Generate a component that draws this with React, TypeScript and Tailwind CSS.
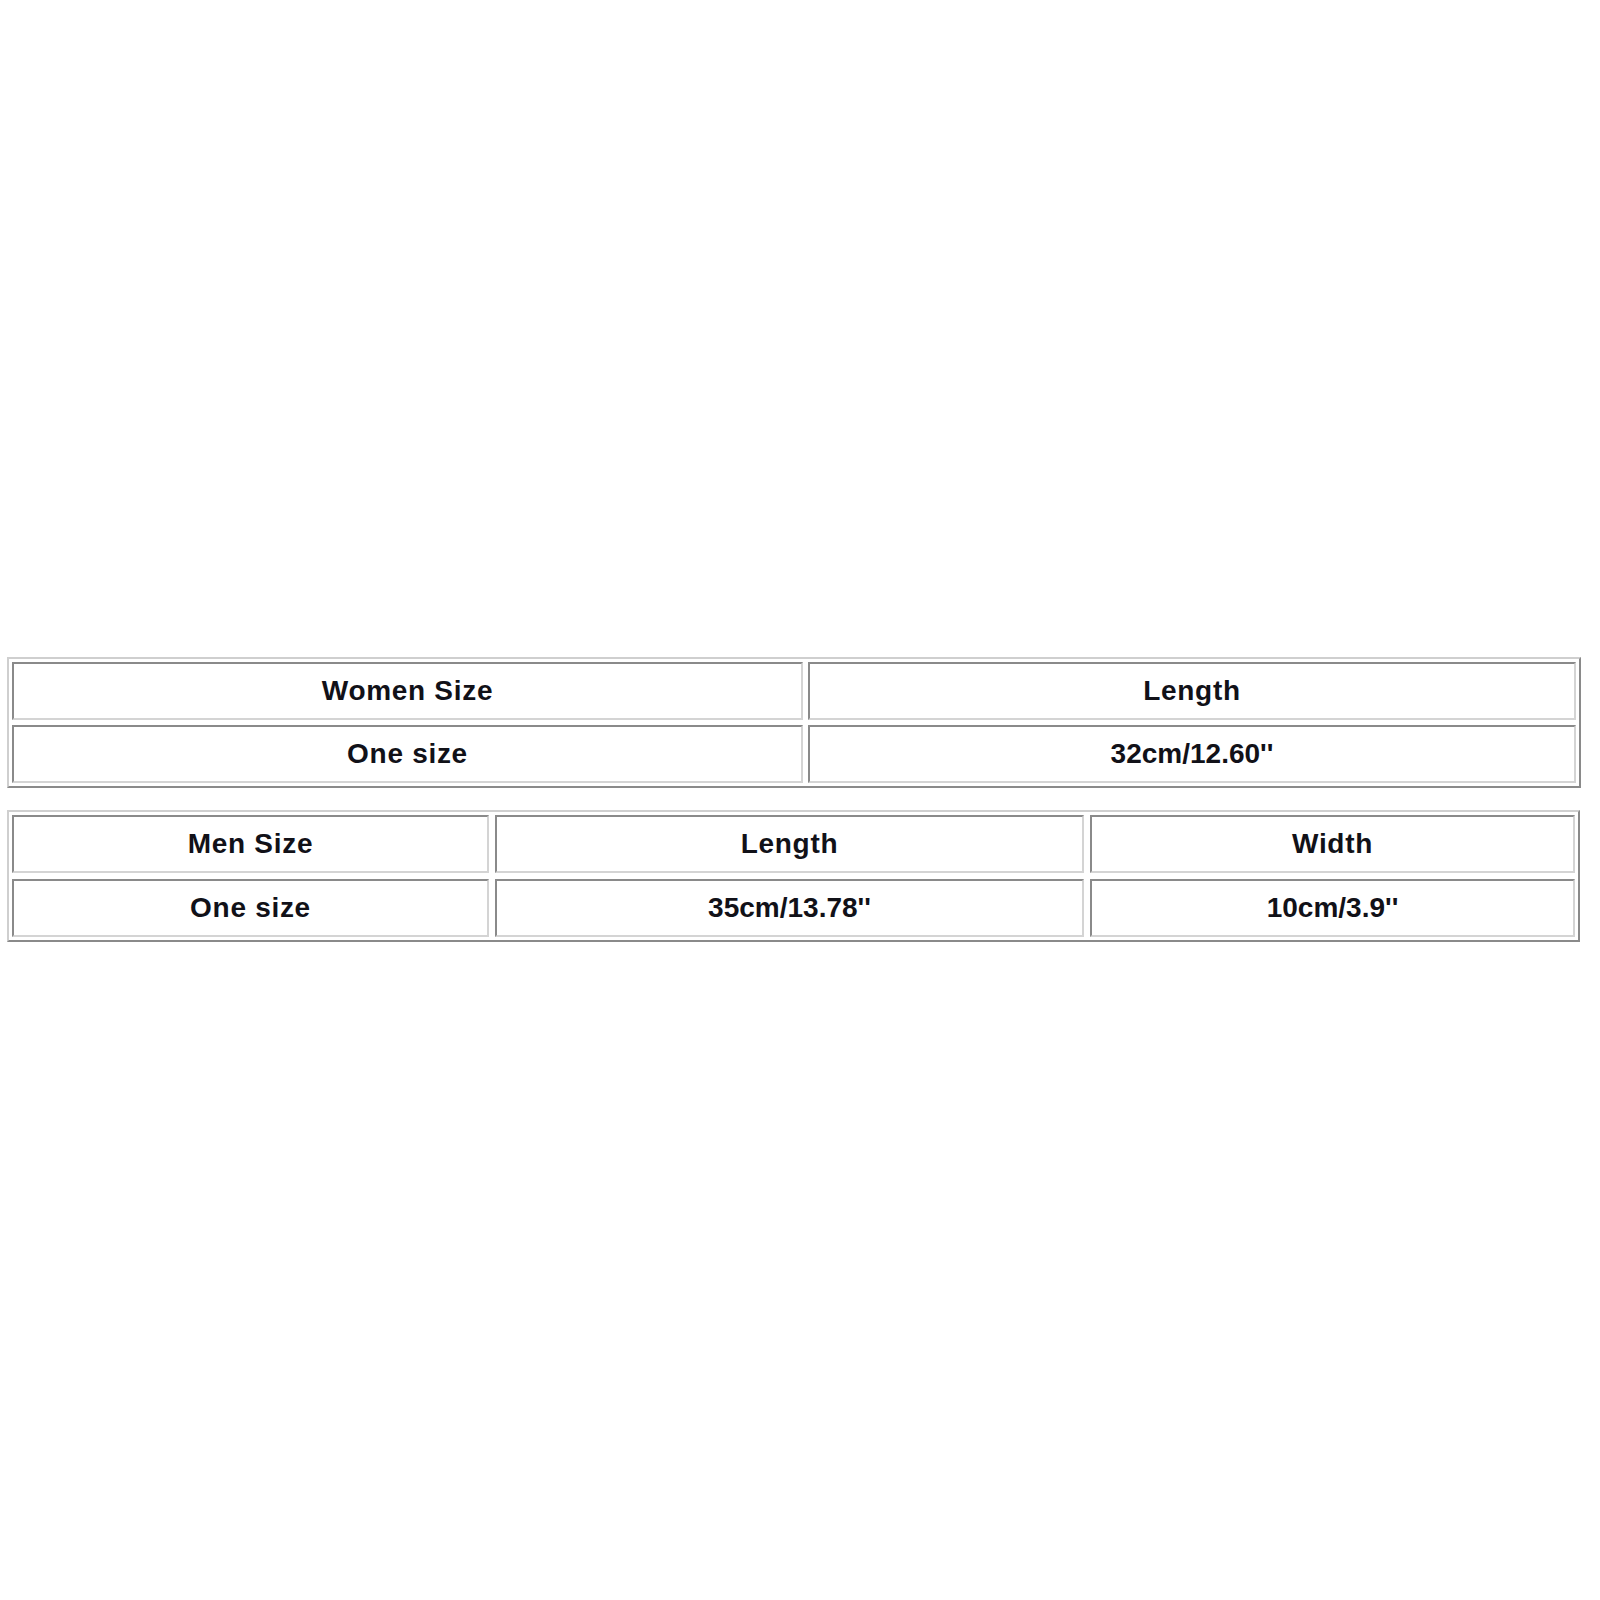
import React from "react";

const cell =
  "flex items-center justify-center border-2 border-t-[#8a8a8a] border-l-[#8a8a8a] border-b-[#d4d4d4] border-r-[#d4d4d4] bg-white text-[28px] font-bold text-[#111118] leading-none";
const word = cell + " tracking-[0.7px]";

export default function App() {
  return (
    <div
      className="min-h-[1600px] w-[1600px] bg-white pt-[657px] pl-[7px]"
      style={{ fontFamily: '"Liberation Sans", Arial, sans-serif' }}
    >
      <div className="w-[1574px] border-2 border-t-[#cfcfcf] border-l-[#cfcfcf] border-b-[#8a8a8a] border-r-[#8a8a8a] p-[3px]">
        <div className="grid grid-cols-[791px_768px] grid-rows-[58px_58px] gap-[5px]">
          <div className={word}>Women Size</div>
          <div className={word}>Length</div>
          <div className={word}>One size</div>
          <div className={cell}>32cm/12.60''</div>
        </div>
      </div>
      <div className="mt-[22px] w-[1573px] border-2 border-t-[#cfcfcf] border-l-[#cfcfcf] border-b-[#8a8a8a] border-r-[#8a8a8a] p-[3px]">
        <div className="grid grid-cols-[477px_589px_485px] grid-rows-[58px_58px] gap-[6px]">
          <div className={word}>Men Size</div>
          <div className={word}>Length</div>
          <div className={word}>Width</div>
          <div className={word}>One size</div>
          <div className={cell}>35cm/13.78''</div>
          <div className={cell}>10cm/3.9''</div>
        </div>
      </div>
    </div>
  );
}
